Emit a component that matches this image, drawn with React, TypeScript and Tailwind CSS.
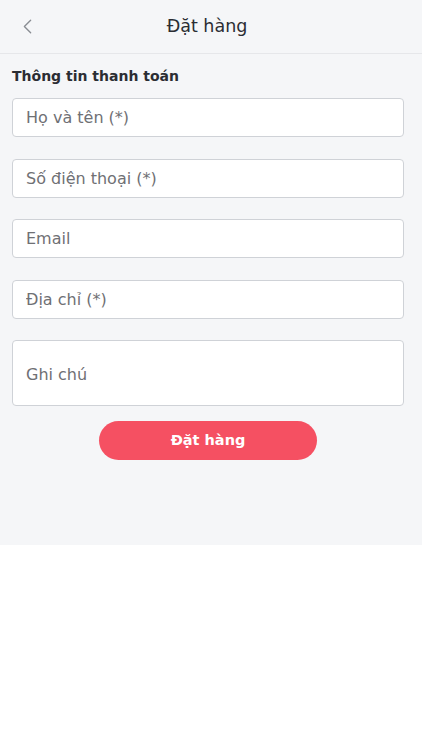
import { ChevronLeft } from "lucide-react";

const FIELDS = ["Họ và tên (*)", "Số điện thoại (*)", "Email", "Địa chỉ (*)"];

const App = () => {
  return (
    <div
      className="min-h-[750px] w-full bg-white"
      style={{ fontFamily: '"DejaVu Sans", "Open Sans", sans-serif' }}
    >
      <div className="h-[545px] bg-[#f5f6f8]">
        {/* Header */}
        <div className="relative flex h-[54px] items-center justify-center border-b border-[#e6e7ea] pr-[8px]">
          <button className="absolute left-[15px] top-[14px] text-[#8a8d93]">
            <ChevronLeft size={25} strokeWidth={1.3} />
          </button>
          <h1 className="text-[17.5px] text-[#2b2d33]">Đặt hàng</h1>
        </div>

        <div className="pl-[12px] pr-[18px]">
          <h2 className="mt-[12px] text-[14px] font-bold text-[#2b2d33]">
            Thông tin thanh toán
          </h2>

          <div className="mt-[11px] flex flex-col gap-[21.5px]">
            {FIELDS.map((f) => (
              <input
                key={f}
                placeholder={f}
                className="h-[39px] w-full rounded-[4px] border border-[#cfd2d7] bg-white px-[13px] text-[16px] text-[#333] placeholder:text-[#6f7074] outline-none"
              />
            ))}
            <textarea
              placeholder="Ghi chú"
              className="h-[66px] w-full resize-none rounded-[4px] border border-[#cfd2d7] bg-white px-[13px] pt-[22px] text-[16px] text-[#333] placeholder:text-[#6f7074] outline-none"
            />
          </div>

          <div className="mt-[15px] flex justify-center">
            <button className="h-[39px] w-[218px] rounded-full bg-[#f55062] text-[14.5px] font-semibold text-white">
              Đặt hàng
            </button>
          </div>
        </div>
      </div>
    </div>
  );
};

export default App;
